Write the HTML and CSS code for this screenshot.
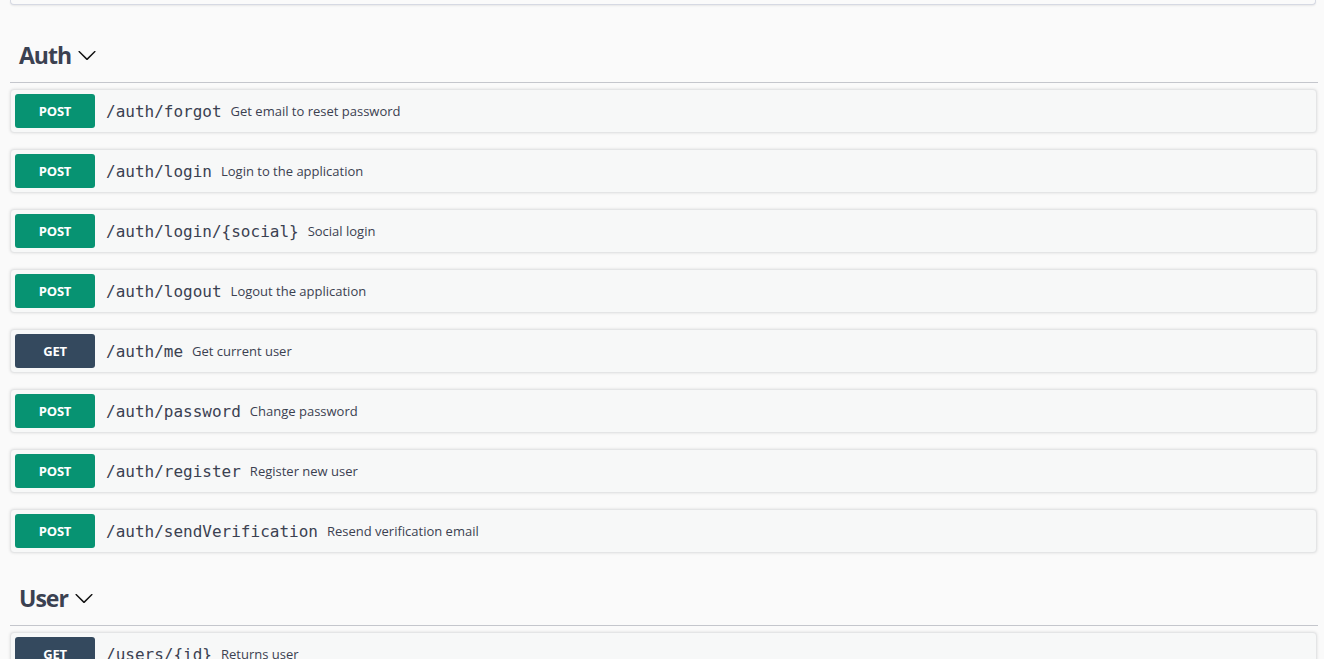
FILE: index.html
```html
<!DOCTYPE html>
<html>
<head>
<meta charset="utf-8">
<link rel="stylesheet" href="styles.css">
</head>
<body>
<div class="wrapper">
  <div class="top-box"></div>

  <section class="tag-section">
    <h3 class="tag-heading"><span>Auth</span>
      <svg class="chev" width="20" height="20" viewBox="0 0 20 20"><path d="M17.418 6.109c.272-.268.709-.268.979 0s.271.701 0 .969l-7.908 7.83c-.27.268-.707.268-.979 0l-7.908-7.830c-.27-.268-.27-.701 0-.969.271-.268.709-.268.979 0L10 13.25l7.418-7.141z"/></svg>
    </h3>
    <div class="opblock"><span class="method post">POST</span><span class="path">/auth/forgot</span><span class="desc">Get email to reset password</span></div>
    <div class="opblock"><span class="method post">POST</span><span class="path">/auth/login</span><span class="desc">Login to the application</span></div>
    <div class="opblock"><span class="method post">POST</span><span class="path">/auth/login/{social}</span><span class="desc">Social login</span></div>
    <div class="opblock"><span class="method post">POST</span><span class="path">/auth/logout</span><span class="desc">Logout the application</span></div>
    <div class="opblock"><span class="method get">GET</span><span class="path">/auth/me</span><span class="desc">Get current user</span></div>
    <div class="opblock"><span class="method post">POST</span><span class="path">/auth/password</span><span class="desc">Change password</span></div>
    <div class="opblock"><span class="method post">POST</span><span class="path">/auth/register</span><span class="desc">Register new user</span></div>
    <div class="opblock"><span class="method post">POST</span><span class="path">/auth/sendVerification</span><span class="desc">Resend verification email</span></div>
  </section>

  <section class="tag-section second">
    <h3 class="tag-heading"><span>User</span>
      <svg class="chev" width="20" height="20" viewBox="0 0 20 20"><path d="M17.418 6.109c.272-.268.709-.268.979 0s.271.701 0 .969l-7.908 7.83c-.27.268-.707.268-.979 0l-7.908-7.830c-.27-.268-.27-.701 0-.969.271-.268.709-.268.979 0L10 13.25l7.418-7.141z"/></svg>
    </h3>
    <div class="opblock"><span class="method get">GET</span><span class="path">/users/{id}</span><span class="desc">Returns user</span></div>
  </section>
</div>
</body>
</html>
```

FILE: styles.css
```css
html, body {
  margin: 0;
  padding: 0;
  background: #fafafa;
  overflow: hidden;
  height: 659px;
}
body {
  font-family: "Open Sans", sans-serif;
  color: #3b4151;
}
.wrapper {
  margin: 0 6px 0 10px;
}
.top-box {
  height: 4px;
  margin: 0 2px 0 0;
  border: 1px solid #d6d9e3;
  border-top: none;
  border-radius: 0 0 4px 4px;
  background: #fafafa;
  box-shadow: 0 1px 2px rgba(0, 0, 0, 0.08);
}
.tag-section {
  margin-top: 33px;
}
.tag-section.second {
  margin-top: 28px;
}
.tag-heading {
  display: flex;
  align-items: center;
  height: 33px;
  margin: 0 0 6px 0;
  padding: 0 0 11px 9px;
  border-bottom: 1px solid #c4c6cc;
  font-size: 23px;
  font-weight: 700;
  letter-spacing: -1px;
  color: #3b4151;
  box-sizing: content-box;
}
.chev {
  margin-left: 6px;
  margin-top: 0;
  fill: #111;
}
.opblock {
  display: flex;
  align-items: center;
  height: 34px;
  margin: 0 1px 16px 0;
  padding: 4px;
  border: 1px solid #e4e5e6;
  border-radius: 4px;
  background: #f7f8f8;
  box-shadow: 0 0 3px rgba(0, 0, 0, 0.12);
}
.method {
  display: flex;
  align-items: center;
  justify-content: center;
  width: 80px;
  height: 34px;
  border-radius: 3px;
  color: #fff;
  font-size: 13px;
  font-weight: 700;
  letter-spacing: -0.2px;
}
.method.post {
  background: #079372;
}
.method.get {
  background: #34495e;
}
.path {
  padding: 0 9px 0 11px;
  font-family: "DejaVu Sans Mono", monospace;
  font-size: 16px;
  color: #3b4151;
}
.desc {
  font-size: 13px;
  color: #3b4151;
}
```
